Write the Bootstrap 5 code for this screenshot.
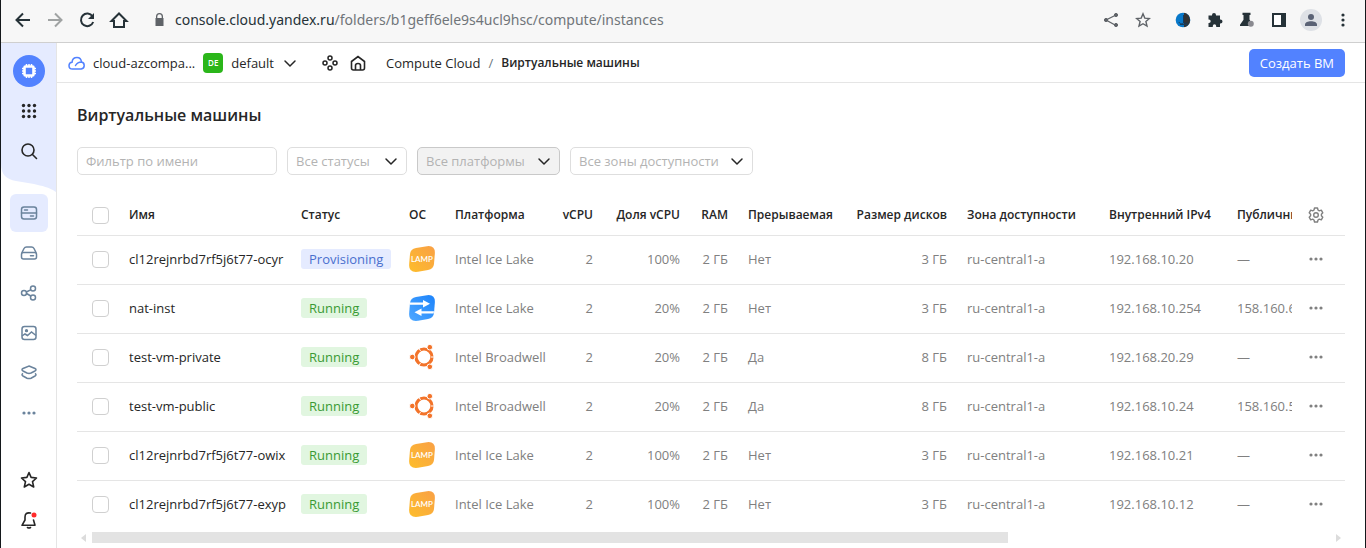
<!DOCTYPE html>
<html lang="ru">
<head>
<meta charset="utf-8">
<meta name="viewport" content="width=device-width, initial-scale=1">
<title>Виртуальные машины</title>
<link href="https://cdn.jsdelivr.net/npm/bootstrap@5.3.0/dist/css/bootstrap.min.css" rel="stylesheet">
<style>
body{font-family:"Open Sans","Noto Sans",sans-serif;font-size:13px;line-height:20px;color:#262626;background:#fff}
a{color:inherit;text-decoration:none}
svg{display:block;flex:none}
.window-frame{border:solid #14181b;border-width:0 1px}
.icon-btn{background:none;border:0;padding:0;color:inherit;display:flex;align-items:center;justify-content:center}
.browser-bar{height:43px;background:#f7f7f7;border-bottom:1px solid #cfcfcf;color:#263238;padding:0 14px 2px 12px}
.browser-bar .address{font:14px/20px "Noto Sans",sans-serif;color:#70757a}
.browser-bar .address b{font-weight:400;color:#263238}
.side{width:56px;border-right:1px solid #e5e5e5;color:#6a839c}
.side .icon-btn{width:38px;height:40px;border-radius:6px}
.side-top{height:150px;position:relative;color:#262626}
.side-top .wave{position:absolute;inset:0;z-index:-1;width:100%;height:150px}
.side .logo-btn{height:32px;width:32px;border-radius:50%;background:#5282ff;color:#fff;margin-top:12px;margin-bottom:4px}
.side .current{background:#e5ebff;height:38px;margin:1px 0}
.app-bar{height:40px;border-bottom:1px solid #e5e5e5;padding:0 20px 0 11px}
.folder-badge{width:20px;height:20px;border-radius:4px;background:#2bb61a;color:#fff;font-size:8px;font-weight:600;line-height:20px;text-align:center}
.crumb-title,th{font-weight:600;font-size:12px}
.create-btn{background:#5282ff;color:#fff;border:0;border-radius:5px;height:28px;padding:0 11px;font-size:13px;line-height:26px}
h1{font-size:16px;line-height:24px;font-weight:600;margin:0}
.filters{gap:10px;margin-bottom:20px}
.filter{height:28px;border:1px solid #dedede;border-radius:5px;font-size:13px;line-height:20px;padding:2px 8px;color:#b3b3b3;background-color:#fff}
.filter::placeholder{color:#b3b3b3}
select.filter{appearance:none;background-repeat:no-repeat;background-position:right 8px center;background-image:url("data:image/svg+xml,%3Csvg xmlns='http://www.w3.org/2000/svg' width='14' height='14' fill='none' stroke='%23262626' stroke-width='1.5' stroke-linecap='round' stroke-linejoin='round'%3E%3Cpath d='M2 5l5 5 5-5'/%3E%3C/svg%3E")}
select.filter.hovered{background-color:#f2f2f2;border-color:#c9c9c9}
.w-name{width:200px}.w-status{width:120px}.w-platform{width:143px}.w-zone{width:183px}
.vm-table{table-layout:fixed;width:100%;white-space:nowrap}
.vm-table th,.vm-table td{padding:0 10px;height:49px;border-bottom:1px solid #e5e5e5;overflow:hidden}
.vm-table thead th{height:40px}
.vm-table tbody td{padding-bottom:2px}
.vm-table tbody tr:last-child td{border-bottom:0}
.vm-table td{color:#808080}
.vm-table td:nth-child(2){color:#262626}
.vm-table .clip{padding-right:0}
.vm-table tr>:last-child{padding-left:16px}
.vm-table .form-check-input{width:17px;height:17px;margin:2px 0 0 5px;border-color:#d0d0d0;border-radius:4px;display:block}
.vm-state{display:inline-block;height:20px;line-height:20px;border-radius:3px;padding:0 8px;background:#e1f6e0;color:#3a9a34}
.vm-state.pending{background:#e5ebff;color:#4a6fce}
.scroll-strip{height:11px;margin:3px 4px 0;gap:6px}
.scroll-strip .thumb{background:#e3e3e3;height:11px;width:74%}
</style>
</head>
<body>
<svg width="0" height="0" class="position-absolute" aria-hidden="true">
<defs>
<linearGradient id="gold" x1="0" y1="1" x2="1" y2="0"><stop stop-color="#fdbd2b"/><stop offset="1" stop-color="#f9a046"/></linearGradient>
<linearGradient id="azure" x1="0" y1="1" x2="1" y2="0"><stop stop-color="#4fa8ff"/><stop offset="1" stop-color="#1c83fb"/></linearGradient>
<symbol id="lamp" viewBox="0 0 26 26"><path d="M7 2 18 .2Q26-.8 25.900 7L25 18Q24.500 23 19 24L9 25.800Q0 27 .1 19L1 8Q1.500 3 7 2Z" fill="url(#gold)"/><text x="13" y="16" text-anchor="middle" font-size="8" font-weight="600" font-family="Lato,sans-serif" fill="#fff">LAMP</text></symbol>
<symbol id="nat" viewBox="0 0 26 26"><path d="M7 2 18 .2Q26-.8 25.900 7L25 18Q24.500 23 19 24L9 25.800Q0 27 .1 19L1 8Q1.500 3 7 2Z" fill="url(#azure)"/><path d="M1 7.600h13V5l7 3.700-7 3.700V9.800H.8ZM25 16.200H12.500v-2.600l-7 3.700 7 3.700v-2.600h12.200Z" fill="#fff"/></symbol>
<symbol id="ubuntu" viewBox="0 0 26 26"><circle cx="15" cy="13" r="8" fill="none" stroke="#f37329" stroke-width="3.200"/><path d="M22 13h4M11.500 6.900 9.500 3.500M11.500 19.100 9.500 22.500" stroke="#fff" stroke-width="1"/><g fill="#f37329" stroke="#fff" stroke-width="1"><circle cx="3.300" cy="13" r="2.800"/><circle cx="20.800" cy="3.200" r="2.800"/><circle cx="20.800" cy="22.800" r="2.800"/></g></symbol>
<symbol id="dots" viewBox="0 0 16 16"><g fill="currentColor"><circle cx="3" cy="8" r="1.600"/><circle cx="8" cy="8" r="1.600"/><circle cx="13" cy="8" r="1.600"/></g></symbol>
</defs>
</svg>
<div class="window-frame min-vh-100 d-flex flex-column">
<div class="browser-bar d-flex align-items-center">
 <button class="icon-btn" aria-label="Назад"><svg width="20" height="20" fill="none" stroke="currentColor" stroke-width="2"><path d="M17 10H4M10 3.500 3.500 10l6.500 6.500"/></svg></button>
 <button class="icon-btn ms-2 ps-1" aria-label="Вперёд"><svg width="20" height="20" fill="none" stroke="#a0a3a3" stroke-width="2"><path d="M3 10h13M10 3.500l6.500 6.500-6.500 6.500"/></svg></button>
 <button class="icon-btn ms-2 ps-1" aria-label="Обновить"><svg width="20" height="20" fill="none" stroke="currentColor" stroke-width="2"><path d="M15.500 6.300A6.300 6.300 0 1 0 16.200 12"/><path d="M17 3v6h-6Z" fill="currentColor" stroke="none"/></svg></button>
 <button class="icon-btn ms-2 ps-1" aria-label="Домой"><svg width="20" height="20" fill="none" stroke="currentColor" stroke-width="2"><path d="M2.500 11 10 3.500l7.500 7.500H15v6H5v-6Z"/></svg></button>
 <svg class="ms-4" width="14" height="16" fill="#5f6368"><path d="M3 6V4.500a3.500 3.500 0 0 1 7 0V6h.5v8h-8V6Zm1.300 0h4.400V4.500a2.200 2.200 0 0 0-4.400 0Z"/></svg>
 <div class="address flex-grow-1 ps-2"><b>console.cloud.yandex.ru</b>/folders/b1geff6ele9s4ucl9hsc/compute/instances</div>
 <div class="d-flex align-items-center">
 <button class="icon-btn me-3" aria-label="Поделиться"><svg width="16" height="16" fill="#5f6368" stroke="#5f6368"><path d="M13 3 3 8l10 5.500" fill="none" stroke-width="1.300"/><circle cx="13" cy="3" r="1.600"/><circle cx="3" cy="8" r="1.600"/><circle cx="13" cy="13" r="1.600"/></svg></button>
 <button class="icon-btn me-4" aria-label="В закладки"><svg width="16" height="16" fill="none" stroke="#5f6368" stroke-width="1.400"><path d="m8 1.800 1.800 4.300 4.600.4-3.500 3 1.100 4.600L8 11.700l-4 2.400 1.100-4.600-3.500-3 4.600-.4Z"/></svg></button>
 <button class="icon-btn me-3" aria-label="Расширение"><svg width="16" height="16"><circle cx="8" cy="8" r="7.300" fill="#0878c9"/><path d="M9 .8a7.300 7.300 0 0 1 0 14.400Z" fill="#333"/><path d="M8.500 3v8M4 10c1 2.500 3 2 4.500 1s3 1 4 0M5 12.500h7" fill="none" stroke="#173b5b"/></svg></button>
 <button class="icon-btn me-3" aria-label="Расширения"><svg width="16" height="16" fill="currentColor"><path d="M1.500 3.500H5V3a2 2 0 0 1 4 0v.5h4v4h.5a2 2 0 0 1 0 4H13V15H9.200v-1a1.700 1.700 0 0 0-3.400 0v1H1.500v-4H2a1.700 1.700 0 0 0 0-3.400h-.5Z"/></svg></button>
 <button class="icon-btn me-3" aria-label="Эксперименты"><svg width="16" height="16" fill="currentColor"><path d="M3.500.8h8V3h-1v4.500L13.500 14H1v-1.200l3.500-5V3h-1Z"/><circle cx="11.800" cy="11.800" r="3" fill="#8a8a90"/></svg></button>
 <button class="icon-btn me-2 pe-1" aria-label="Боковая панель"><svg width="16" height="16"><path d="M2 2h12v12H2Z" fill="#fff" stroke="currentColor" stroke-width="2"/><path d="M10 1h5v14h-5Z" fill="currentColor"/></svg></button>
 <button class="icon-btn me-2" aria-label="Профиль"><svg width="24" height="24"><circle cx="12" cy="12" r="11" fill="#dee1e6"/><circle cx="12" cy="9" r="3" fill="#5a6275"/><path d="M6 18v-1.500c0-4.500 12-4.500 12 0V18Z" fill="#5a6275"/></svg></button>
 <button class="icon-btn ps-1" aria-label="Меню"><svg width="16" height="16" fill="currentColor"><circle cx="8" cy="3" r="1.600"/><circle cx="8" cy="8" r="1.600"/><circle cx="8" cy="13" r="1.600"/></svg></button>
 </div>
</div>
<div class="d-flex flex-grow-1">
<nav class="side d-flex flex-column align-items-center flex-shrink-0" aria-label="Сервисы">
 <div class="side-top w-100 d-flex flex-column align-items-center">
  <svg class="wave" viewBox="0 0 55 150" preserveAspectRatio="none"><path d="M0 0H55V149C48 144 41 143 33 141L15 138C5 136 0 132 0 120Z" fill="#e5ebff"/></svg>
  <button class="icon-btn logo-btn" aria-label="Compute Cloud"><svg width="16" height="16" fill="none" stroke="currentColor"><rect x="3.500" y="3.500" width="9" height="9" rx="1" stroke-width="2.600"/><path d="M5.500 1v2M8 1v2M10.500 1v2M5.500 13v2M8 13v2M10.500 13v2M1 5.500h2M1 8h2M1 10.500h2M13 5.500h2M13 8h2M13 10.500h2" stroke-width="1.500"/></svg></button>
  <button class="icon-btn" aria-label="Все сервисы"><svg width="16" height="16" fill="currentColor"><g id="r"><circle cx="2.500" cy="2.500" r="1.700"/><circle cx="8" cy="2.500" r="1.700"/><circle cx="13.500" cy="2.500" r="1.700"/></g><use href="#r" y="5.500"/><use href="#r" y="11"/></svg></button>
  <button class="icon-btn" aria-label="Поиск"><svg width="18" height="18" fill="none" stroke="currentColor" stroke-width="1.600" stroke-linecap="round"><circle cx="8" cy="8" r="6"/><path d="m12.500 12.500 4 4"/></svg></button>
 </div>
 <button class="icon-btn current" aria-label="Виртуальные машины"><svg width="18" height="18" fill="none" stroke="currentColor" stroke-width="1.500" stroke-linecap="round"><rect x="1.500" y="3" width="15" height="12" rx="2.500"/><path d="M1.500 9h15M4.500 6h3M10.500 12h3"/></svg></button>
 <button class="icon-btn" aria-label="Диски"><svg width="18" height="18" fill="none" stroke="currentColor" stroke-width="1.500" stroke-linecap="round"><path d="m2 8.500 2-4q.8-1.500 2.500-1.500h5q1.700 0 2.500 1.500l2 4"/><rect x="1.500" y="8.500" width="15" height="6.500" rx="2"/><path d="M10.500 11.700h3"/></svg></button>
 <button class="icon-btn" aria-label="Группы"><svg width="18" height="18" fill="none" stroke="currentColor" stroke-width="1.500"><circle cx="4" cy="9" r="2.500"/><circle cx="13" cy="4.500" r="2.500"/><circle cx="13" cy="13.500" r="2.500"/><path d="m6.300 8 4.400-2.200M6.500 9.500l4.300 2.500"/></svg></button>
 <button class="icon-btn" aria-label="Образы"><svg width="18" height="18" fill="none" stroke="currentColor" stroke-width="1.500"><rect x="2" y="2.500" width="14" height="13" rx="2.500"/><circle cx="6.500" cy="6.700" r=".9" fill="currentColor"/><path d="m2 12 3-2 2.500 1.500L11.500 8 16 11.500"/></svg></button>
 <button class="icon-btn" aria-label="Снимки"><svg width="18" height="18" fill="none" stroke="currentColor" stroke-width="1.500"><path d="m9 2 6 2.500q2 1 0 2.500l-4 2q-2 .8-4 0L3 7q-2-1.500 0-2.500ZM3 9.300q-2 1.400 0 2.700l4 2.200q2 .8 4 0l4-2.200q2-1.300 0-2.700"/></svg></button>
 <button class="icon-btn" aria-label="Ещё"><svg width="16" height="16"><use href="#dots"/></svg></button>
 <button class="icon-btn mt-auto" aria-label="Избранное"><svg width="18" height="18" fill="none" stroke="#262626" stroke-width="1.600" stroke-linejoin="round"><path d="m9 1.500 2.100 4.900 5.400.6-4 3.600 1.200 5.400L9 13.300 4.300 16l1.200-5.400-4-3.600 5.400-.6Z"/></svg></button>
 <button class="icon-btn mb-2" aria-label="Уведомления"><svg width="18" height="18" fill="none" stroke="#262626" stroke-width="1.600" stroke-linecap="round" stroke-linejoin="round"><path d="M10.500 2Q5 1 5 6v3l-3 5.300h13L13.500 9"/><path d="M7.500 16.500q1.500 1 3 0"/><circle cx="14" cy="4" r="2.500" fill="#ff2b2b" stroke="none"/></svg></button>
</nav>
<div class="flex-grow-1 overflow-hidden">
 <header class="app-bar d-flex align-items-center">
  <a href="#" class="d-flex align-items-center"><svg class="me-2" width="17" height="16" fill="none" stroke="#5282ff" stroke-width="1.500" stroke-linecap="round"><path d="M4.500 14Q1 14 1 10.700 1 7.500 4 7.300 4.500 2.500 9 2.500q4 0 4.500 4.500 2.700.5 2.700 3.500t-3 3.500ZM7.500 10.500q2-3.500 6-3.500"/></svg>cloud-azcompa...</a>
  <a href="#" class="d-flex align-items-center ms-2"><span class="folder-badge me-1">DE</span><span class="ps-1">default</span></a>
  <button class="icon-btn ms-2" aria-label="Выбрать каталог"><svg width="16" height="16" fill="none" stroke="currentColor" stroke-width="1.500" stroke-linecap="round"><path d="m3 6 5 5 5-5"/></svg></button>
  <button class="icon-btn ms-4" aria-label="Ресурсы"><svg width="16" height="16" fill="none" stroke="currentColor" stroke-width="1.500"><circle cx="8" cy="3" r="2"/><circle cx="3" cy="8" r="2"/><circle cx="13" cy="8" r="2"/><circle cx="8" cy="13" r="2"/></svg></button>
  <a href="#" class="ms-2 ps-1" aria-label="Главная"><svg width="16" height="16" fill="none" stroke="currentColor" stroke-width="1.600"><path d="M1.500 6.500 8 1.500l6.500 5V13q0 2-2 2h-9q-2 0-2-2ZM5.500 15v-4.500q0-2 2.500-2t2.500 2V15"/></svg></a>
  <a href="#" class="ms-3 ps-1">Compute Cloud</a><span class="px-2 text-secondary">/</span><span class="crumb-title">Виртуальные машины</span>
  <button class="create-btn ms-auto">Создать ВМ</button>
 </header>
 <main class="px-3 mx-1">
  <h1 class="pt-3 mt-1">Виртуальные машины</h1>
  <form class="d-flex mt-3 pt-1 filters">
   <input class="filter w-name" placeholder="Фильтр по имени" aria-label="Фильтр по имени">
   <select class="filter w-status" aria-label="Статус"><option>Все статусы</option></select>
   <select class="filter w-platform hovered" aria-label="Платформа"><option>Все платформы</option></select>
   <select class="filter w-zone" aria-label="Зона"><option>Все зоны доступности</option></select>
  </form>
  <table class="vm-table">
   <colgroup><col style="width:42px"><col style="width:172px"><col style="width:108px"><col style="width:46px"><col style="width:105px"><col style="width:53px"><col style="width:87px"><col style="width:48px"><col style="width:107px"><col style="width:112px"><col style="width:142px"><col style="width:128px"><col><col style="width:53px"></colgroup>
   <thead><tr><th><input type="checkbox" class="form-check-input" aria-label="Выбрать все"></th><th>Имя</th><th>Статус</th><th>ОС</th><th>Платформа</th><th class="text-end">vCPU</th><th class="text-end">Доля vCPU</th><th class="text-end">RAM</th><th>Прерываемая</th><th class="text-end">Размер дисков</th><th>Зона доступности</th><th>Внутренний IPv4</th><th class="clip">Публичный</th><th><button class="icon-btn" aria-label="Настройки"><svg width="16" height="16" fill="none" stroke="#808080" stroke-width="1.400" stroke-linejoin="round"><path d="M6.500 1h3l.5 2 1.300.8 2-.6 1.500 2.600L13.400 7.200v1.600l1.400 1.400-1.500 2.600-2-.6L10 13l-.5 2h-3L6 13l-1.300-.8-2 .6-1.500-2.600 1.400-1.400V7.200L1.200 5.800l1.500-2.600 2 .6L6 3Z"/><circle cx="8" cy="8" r="2.300"/></svg></button></th></tr></thead>
   <tbody>
    <tr><td><input type="checkbox" class="form-check-input" aria-label="Выбрать"></td><td>cl12rejnrbd7rf5j6t77-ocyr</td><td><span class="vm-state pending">Provisioning</span></td><td><svg width="26" height="26"><use href="#lamp"/></svg></td><td>Intel Ice Lake</td><td class="text-end">2</td><td class="text-end">100%</td><td class="text-end">2 ГБ</td><td>Нет</td><td class="text-end">3 ГБ</td><td>ru-central1-a</td><td>192.168.10.20</td><td class="clip">—</td><td><button class="icon-btn" aria-label="Действия"><svg width="16" height="16"><use href="#dots"/></svg></button></td></tr>
    <tr><td><input type="checkbox" class="form-check-input" aria-label="Выбрать"></td><td>nat-inst</td><td><span class="vm-state">Running</span></td><td><svg width="26" height="26"><use href="#nat"/></svg></td><td>Intel Ice Lake</td><td class="text-end">2</td><td class="text-end">20%</td><td class="text-end">2 ГБ</td><td>Нет</td><td class="text-end">3 ГБ</td><td>ru-central1-a</td><td>192.168.10.254</td><td class="clip">158.160.6</td><td><button class="icon-btn" aria-label="Действия"><svg width="16" height="16"><use href="#dots"/></svg></button></td></tr>
    <tr><td><input type="checkbox" class="form-check-input" aria-label="Выбрать"></td><td>test-vm-private</td><td><span class="vm-state">Running</span></td><td><svg width="26" height="26"><use href="#ubuntu"/></svg></td><td>Intel Broadwell</td><td class="text-end">2</td><td class="text-end">20%</td><td class="text-end">2 ГБ</td><td>Да</td><td class="text-end">8 ГБ</td><td>ru-central1-a</td><td>192.168.20.29</td><td class="clip">—</td><td><button class="icon-btn" aria-label="Действия"><svg width="16" height="16"><use href="#dots"/></svg></button></td></tr>
    <tr><td><input type="checkbox" class="form-check-input" aria-label="Выбрать"></td><td>test-vm-public</td><td><span class="vm-state">Running</span></td><td><svg width="26" height="26"><use href="#ubuntu"/></svg></td><td>Intel Broadwell</td><td class="text-end">2</td><td class="text-end">20%</td><td class="text-end">2 ГБ</td><td>Да</td><td class="text-end">8 ГБ</td><td>ru-central1-a</td><td>192.168.10.24</td><td class="clip">158.160.5</td><td><button class="icon-btn" aria-label="Действия"><svg width="16" height="16"><use href="#dots"/></svg></button></td></tr>
    <tr><td><input type="checkbox" class="form-check-input" aria-label="Выбрать"></td><td>cl12rejnrbd7rf5j6t77-owix</td><td><span class="vm-state">Running</span></td><td><svg width="26" height="26"><use href="#lamp"/></svg></td><td>Intel Ice Lake</td><td class="text-end">2</td><td class="text-end">100%</td><td class="text-end">2 ГБ</td><td>Нет</td><td class="text-end">3 ГБ</td><td>ru-central1-a</td><td>192.168.10.21</td><td class="clip">—</td><td><button class="icon-btn" aria-label="Действия"><svg width="16" height="16"><use href="#dots"/></svg></button></td></tr>
    <tr><td><input type="checkbox" class="form-check-input" aria-label="Выбрать"></td><td>cl12rejnrbd7rf5j6t77-exyp</td><td><span class="vm-state">Running</span></td><td><svg width="26" height="26"><use href="#lamp"/></svg></td><td>Intel Ice Lake</td><td class="text-end">2</td><td class="text-end">100%</td><td class="text-end">2 ГБ</td><td>Нет</td><td class="text-end">3 ГБ</td><td>ru-central1-a</td><td>192.168.10.12</td><td class="clip">—</td><td><button class="icon-btn" aria-label="Действия"><svg width="16" height="16"><use href="#dots"/></svg></button></td></tr>
   </tbody>
  </table>
  <div class="scroll-strip d-flex align-items-center"><svg width="5" height="8" fill="#dcdcdc"><path d="M5 0v8L0 4Z"/></svg><div class="flex-grow-1"><div class="thumb"></div></div><svg width="5" height="8" fill="#dcdcdc"><path d="M0 0v8l5-4Z"/></svg></div>
 </main>
</div>
</div>
</div>
<script src="https://cdn.jsdelivr.net/npm/bootstrap@5.3.0/dist/js/bootstrap.bundle.min.js"></script>
</body>
</html>
